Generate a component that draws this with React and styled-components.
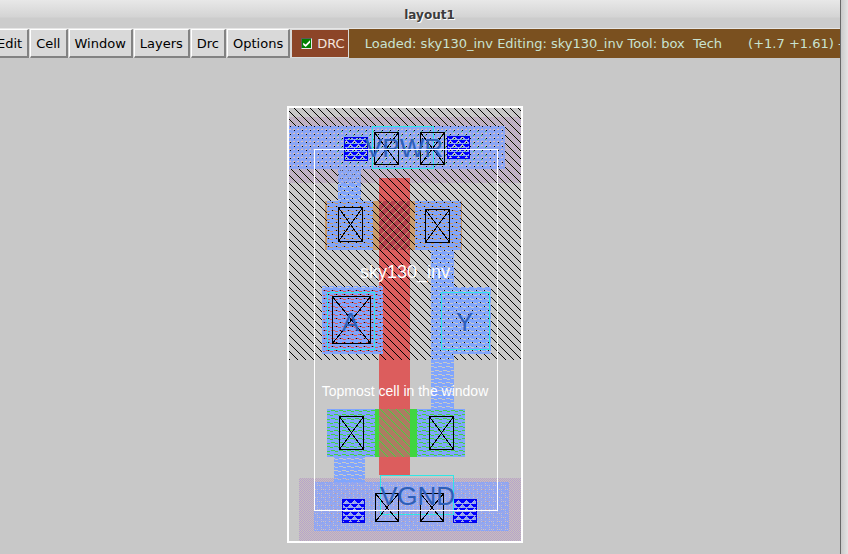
import React from "react";
import styled, { createGlobalStyle } from "styled-components";

const GlobalStyle = createGlobalStyle`
  body {
    margin: 0;
    overflow: hidden;
    background: #c8c8c8;
    font-family: "DejaVu Sans", sans-serif;
  }
`;

const Frame = styled.div`
  display: flex;
  height: 100vh;
`;

const Window = styled.main`
  display: flex;
  flex-direction: column;
  flex: 1;
  min-width: 0;
  overflow: hidden;
  background: #c8c8c8;
`;

const FrameEdge = styled.div`
  flex: none;
  width: 7px;
  border-left: 1px solid #686868;
  background: linear-gradient(90deg, #c9c9c9, #e4e4e4);
`;

const TitleBar = styled.header`
  display: flex;
  flex: none;
  justify-content: center;
  align-items: center;
  height: 28px;
  padding-left: 19px;
  background: linear-gradient(#e8e8e8, #d4d4d4 60%, #cccccc 65%);
  border-bottom: 1px solid #e6e6e6;
`;

const Title = styled.h1`
  margin: 0;
  padding-top: 2px;
  font-size: 12px;
  line-height: 16px;
  color: #3c3c3c;
  text-shadow: 1px 1px 0 #ffffff;
`;

const MenuBar = styled.nav`
  display: flex;
  flex: none;
  height: 29px;
  overflow: hidden;
  white-space: pre;
  font-size: 13px;
`;

const Menus = styled.div`
  display: flex;
  flex: none;
  gap: 1px;
  margin-left: -9px;
  padding-right: 2px;
  background: #d9d9d9;
`;

const MenuButton = styled.button`
  padding: 0 5px;
  border: solid;
  border-width: 1px 2px 2px 1px;
  border-color: #ffffff #828282 #828282 #ffffff;
  background: #d9d9d9;
  color: #000000;
  font: inherit;
`;

const DrcToggle = styled.label`
  display: flex;
  flex: none;
  align-items: center;
  gap: 5px;
  padding: 0 3px 0 9px;
  border: solid #d9d9d9;
  border-width: 1px 1px 1px 0;
  background: #8c4528;
  color: #f4e4dc;
`;

const Tick = styled.input`
  appearance: none;
  display: grid;
  place-items: center;
  width: 11px;
  height: 11px;
  margin: 0;
  border: 1px solid;
  border-color: #5c5c5c #e8e8e8 #e8e8e8 #5c5c5c;
  background: #008000;

  &:checked::before {
    content: "";
    width: 7px;
    height: 7px;
    background: #ffffff;
    clip-path: polygon(0 38%, 36% 66%, 100% 0, 100% 36%, 36% 100%, 0 72%);
  }
`;

const Status = styled.div`
  display: flex;
  flex: 1;
  min-width: 0;
  align-items: center;
  gap: 26px;
  padding-left: 16px;
  overflow: hidden;
  background: #7a501f;
  color: #c9e3d2;
`;

const StatusText = styled.span`
  flex: none;
`;

const Canvas = styled.section`
  flex: 1;
  min-height: 0;
  overflow: hidden;
  padding: 48px 0 0 287px;
`;

const Drawing = styled.svg`
  display: block;
  width: 236px;
  height: 437px;
`;

const CellText = styled.text`
  font-family: "Liberation Sans", sans-serif;
  font-size: ${(p) => p.$size}px;
  fill: ${(p) => p.$color};
`;

const inks = {
  b: "#80a5fd",
  k: "#000000",
  p: "#b6a2cc",
  t: "#c8c0bc",
  v: "#a4a6e2",
  l: "#88a6f8",
  d: "#dcc0b8",
  g: "#42c842",
  r: "#d99c8c",
  w: "#cdc0c6",
  o: "#c99c6d",
  n: "#40d640",
  u: "#0000ff",
};

const stipples = {
  well: { x: 2, rows: ["k.......", ".k......", "..k.....", "...k....", "....k...", ".....k..", "......k.", ".......k"] },
  metal: { x: 2, y: 1, rows: ["bbbbbbbb", "b....bbb", "bbbbb...", "bbbbbbbb", "bbbbbbbb", "bbbb....", "...bbbbb", "bbbbbbbb"] },
  tap: { rows: ["pt", "tp"] },
  rail: { rows: ["llvlllvl", "lddllddl", "vlllvlkl", "llllllll", "llvlllvl", "lddllddl", "vlklvlll", "llllllll"] },
  railGreen: { x: 5, rows: ["........", "........", "........", "g.......", "........", "........", "........", "....g..."] },
  railLow: { rows: ["vlvlvlvl", "ldldlwlv", "vlllvlll", "lvlvlwlv", "vlvlvlvl", "lwlvldld", "vlllvlll", "lwlvlvlv"] },
  railRed: { x: 3, rows: ["........", "r.......", "........", "........", "........", "....r...", "........", "........"] },
  pgate: { rows: [".......o", "......o.", ".....o..", "....o...", "...o....", "..o.....", ".o......", "o......."] },
  ngate: { x: 3, rows: ["n.......", ".n......", "..n.....", "...n....", "....n...", ".....n..", "......n.", ".......n"] },
  via: { x: 3, y: 4, rows: ["uuuuuuu.", ".uuuuu..", "..uuu...", "........", "uuu.uuuu", "uu...uuu", "u.....uu", "........"] },
};

function Stipple({ id, x = 0, y = 0, rows }) {
  return (
    <pattern id={id} x={x} y={y} width={rows[0].length} height={rows.length} patternUnits="userSpaceOnUse">
      {rows.flatMap((row, j) =>
        [...row].map((ink, i) =>
          ink === "." ? null : <rect key={`${i}-${j}`} x={i} y={j} width="1" height="1" fill={inks[ink]} />
        )
      )}
    </pattern>
  );
}

function Area({ box: [left, top, right, bottom], fill, opacity }) {
  return <rect x={left} y={top} width={right - left} height={bottom - top} fill={fill} opacity={opacity} />;
}

function Outline({ box: [left, top, right, bottom], stroke }) {
  return (
    <path
      d={`M${left} ${top}H${right}V${bottom}H${left}ZM${left + 1} ${top + 1}V${bottom - 1}H${right - 1}V${top + 1}Z`}
      fill={stroke}
      fillRule="evenodd"
    />
  );
}

function Contact({ box }) {
  const [left, top, right, bottom] = box;
  return (
    <g>
      <Outline box={box} stroke="#000000" />
      <path d={`M${left} ${top}L${right} ${bottom}M${right} ${top}L${left} ${bottom}`} stroke="#000000" />
    </g>
  );
}

function Via({ box }) {
  return (
    <g>
      <Area box={box} fill="url(#via)" />
      <Outline box={box} stroke="#0000e8" />
    </g>
  );
}

const metal = [
  [338, 169, 361, 202],
  [327, 201, 373, 250],
  [415, 201, 461, 250],
  [431, 250, 454, 287],
  [322, 286, 383, 354],
  [431, 287, 491, 354],
  [431, 354, 454, 409],
  [327, 409, 375, 457],
  [417, 409, 465, 457],
  [334, 457, 365, 482],
];

const contacts = [
  [374, 132, 399, 165],
  [420, 132, 445, 165],
  [338, 207, 363, 242],
  [425, 209, 450, 243],
  [332, 296, 371, 344],
  [339, 416, 364, 450],
  [429, 416, 454, 450],
  [375, 493, 399, 522],
  [420, 493, 444, 522],
];

const vias = [
  [344, 137, 368, 161],
  [447, 136, 470, 159],
  [342, 499, 365, 523],
  [453, 499, 477, 523],
];

const ports = [
  [372, 126, 434, 169],
  [327, 292, 375, 350],
  [441, 292, 490, 350],
  [380, 475, 454, 515],
];

const portNames = [
  ["VPWR", 365, 157],
  ["A", 342, 331],
  ["Y", 456, 331],
  ["VGND", 380, 505],
];

function Layout() {
  return (
    <Drawing viewBox="287 106 236 437" role="img" aria-label="sky130_inv layout" shapeRendering="crispEdges">
      <defs>
        {Object.entries(stipples).map(([id, s]) => (
          <Stipple key={id} id={id} {...s} />
        ))}
      </defs>
      <Area box={[289, 117, 521, 183]} fill="url(#tap)" />
      <Area box={[299, 478, 521, 541]} fill="url(#tap)" />
      <Area box={[325, 201, 462, 250]} fill="#c99c6d" />
      <Area box={[327, 409, 465, 457]} fill="#40d640" />
      <Area box={[379, 178, 410, 475]} fill="#dc5d5d" />
      <Area box={[323, 288, 382, 353]} fill="#dc5d5d" />
      <Area box={[379, 201, 410, 250]} fill="#b6424f" />
      <Area box={[379, 201, 410, 250]} fill="url(#pgate)" />
      <Area box={[379, 409, 410, 457]} fill="#ad7c62" />
      <Area box={[379, 409, 410, 457]} fill="url(#ngate)" />
      <Area box={[289, 108, 521, 360]} fill="url(#well)" />
      {metal.map((box) => (
        <Area key={box.join()} box={box} fill="url(#metal)" />
      ))}
      <Area box={[289, 126, 505, 169]} fill="url(#rail)" />
      <Area box={[334, 130, 486, 166]} fill="url(#railGreen)" />
      <Area box={[338, 169, 361, 183]} fill="url(#rail)" opacity="0.6" />
      <Area box={[314, 482, 509, 531]} fill="url(#railLow)" />
      <Area box={[330, 487, 488, 525]} fill="url(#railRed)" />
      {vias.map((box) => (
        <Via key={box.join()} box={box} />
      ))}
      {ports.map((box) => (
        <Outline key={box.join()} box={box} stroke="#2fe6e6" />
      ))}
      {contacts.map((box) => (
        <Contact key={box.join()} box={box} />
      ))}
      {portNames.map(([name, x, y]) => (
        <CellText key={name} x={x} y={y} $size={26} $color="#2e5fb8">
          {name}
        </CellText>
      ))}
      <Outline box={[314, 149, 498, 511]} stroke="#ffffff" />
      <rect x="288" y="107" width="234" height="435" fill="none" stroke="#ffffff" strokeWidth="2" />
      <CellText x="405" y="278" textAnchor="middle" $size={18} $color="#ffffff">
        sky130_inv
      </CellText>
      <CellText x="405" y="396" textAnchor="middle" $size={14} $color="#ffffff">
        Topmost cell in the window
      </CellText>
    </Drawing>
  );
}

const menuNames = ["Edit", "Cell", "Window", "Layers", "Drc", "Options"];

export default function App() {
  return (
    <Frame>
      <GlobalStyle />
      <Window>
        <TitleBar>
          <Title>layout1</Title>
        </TitleBar>
        <MenuBar>
          <Menus>
            {menuNames.map((name) => (
              <MenuButton key={name} type="button">
                {name}
              </MenuButton>
            ))}
          </Menus>
          <DrcToggle>
            <Tick type="checkbox" defaultChecked />
            DRC
          </DrcToggle>
          <Status>
            <StatusText>{"Loaded: sky130_inv Editing: sky130_inv Tool: box  Tech"}</StatusText>
            <StatusText>{"(+1.7 +1.61) -"}</StatusText>
          </Status>
        </MenuBar>
        <Canvas>
          <Layout />
        </Canvas>
      </Window>
      <FrameEdge />
    </Frame>
  );
}
